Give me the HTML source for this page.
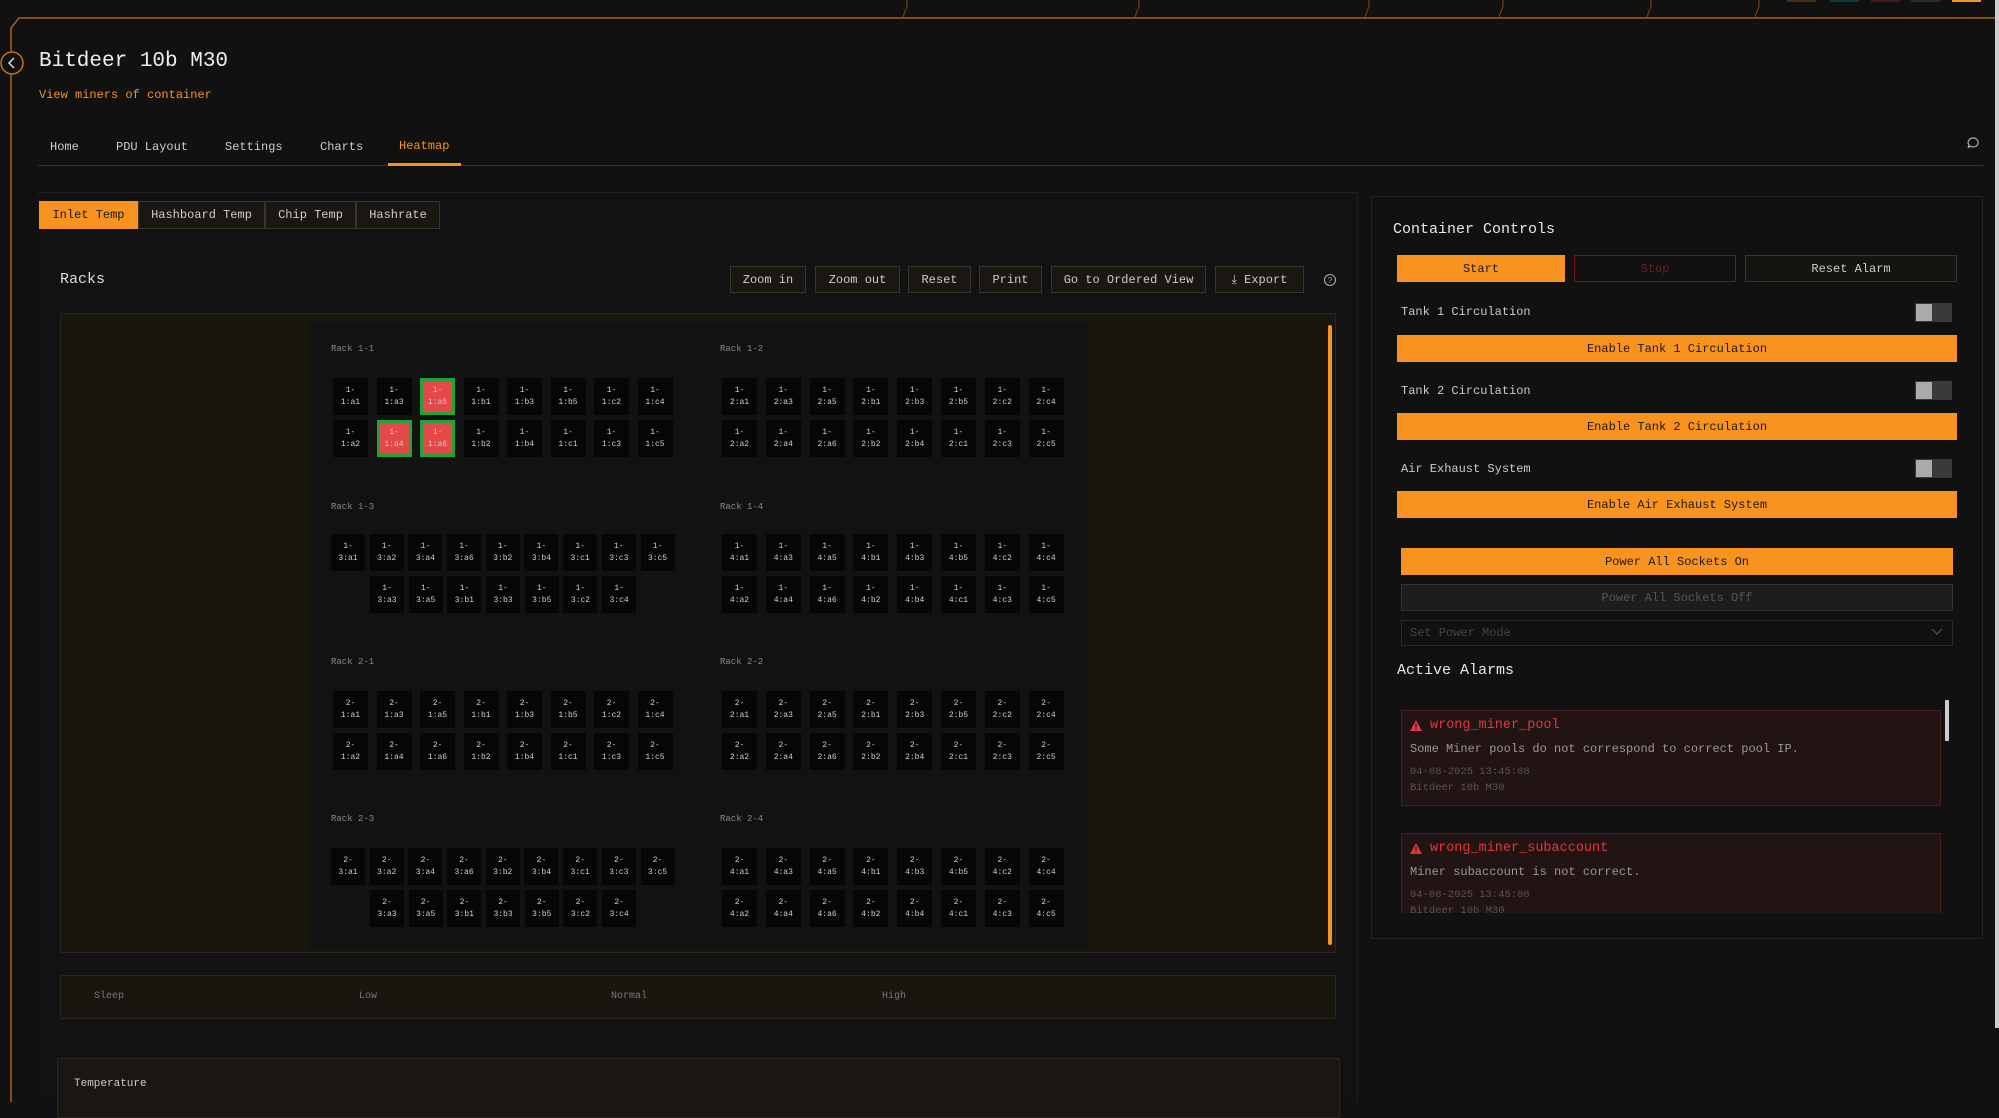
<!DOCTYPE html>
<html><head><meta charset="utf-8">
<style>
*{margin:0;padding:0;box-sizing:border-box}
body{width:1999px;height:1102px;background:#111111;font-family:"Liberation Mono",monospace;color:#ddd;position:relative;overflow:hidden}
.a{position:absolute}
.t{position:absolute;white-space:nowrap;line-height:1}
.btn{position:absolute;display:flex;align-items:center;justify-content:center;font-size:12px;white-space:nowrap}
.tb{background:#1a1712;border:1px solid #3a352c;color:#ccc}
.or{background:#f7931e;color:#1a1a1a}
.row{position:absolute;display:flex}
.c{width:35px;height:37px;background:#060606;color:#cfcfcf;font-size:8px;line-height:12px;text-align:center;padding-top:7px;flex:none}
.n{width:34px}
.r{background:#e54848;border:3px solid #1fa33a;padding-top:4px}
.lbl{position:absolute;font-size:9px;color:#888}
</style></head><body>
<!-- top decorations -->
<div class="a" style="left:1787px;top:0;width:29px;height:2px;background:#4a3010"></div>
<div class="a" style="left:1830px;top:0;width:29px;height:2px;background:#0d3a3a"></div>
<div class="a" style="left:1871px;top:0;width:29px;height:2px;background:#4a1818"></div>
<div class="a" style="left:1911px;top:0;width:29px;height:2px;background:#2a2a30"></div>
<div class="a" style="left:1952px;top:0;width:29px;height:2px;background:#f7931e"></div>
<svg class="a" style="left:0;top:0" width="1999" height="1102">
<path d="M11 1102 V28 L19 18 H1995" fill="none" stroke="#a8630f" stroke-width="1.5"/>
<path d="M903 17 L907 6 V0 M1135 17 L1139 6 V0 M1365 17 L1369 6 V0 M1499 17 L1503 6 V0 M1647 17 L1651 6 V0 M1755 17 L1759 6 V0" stroke="#7a4a12" stroke-width="1" fill="none"/>
<circle cx="12" cy="63" r="11" fill="#111" stroke="#c07316" stroke-width="1.5"/>
<path d="M14 58 L9 63 L14 68" fill="none" stroke="#ddd" stroke-width="1.5"/>
</svg>
<div class="a" style="left:1995px;top:0;width:4px;height:1028px;background:#cfcfcf"></div>

<div class="t" style="left:39px;top:51px;font-size:21px;color:#eee">Bitdeer 10b M30</div>
<div class="t" style="left:39px;top:89px;font-size:12px;color:#f7931e">View miners of container</div>

<div class="t" style="left:50px;top:141px;font-size:12px;color:#ccc">Home</div>
<div class="t" style="left:116px;top:141px;font-size:12px;color:#ccc">PDU Layout</div>
<div class="t" style="left:225px;top:141px;font-size:12px;color:#ccc">Settings</div>
<div class="t" style="left:320px;top:141px;font-size:12px;color:#ccc">Charts</div>
<div class="t" style="left:399px;top:140px;font-size:12px;color:#f7931e">Heatmap</div>
<div class="a" style="left:38px;top:165px;width:1945px;height:1px;background:#333"></div>
<div class="a" style="left:388px;top:163px;width:73px;height:3px;background:#f7931e"></div>
<svg class="a" style="left:1966px;top:136px" width="14" height="14"><path d="M7 2 A5 4.5 0 1 1 4 10 L2 12 L3 9 A5 4.5 0 0 1 7 2Z" fill="none" stroke="#aaa" stroke-width="1.2"/></svg>

<!-- left panel -->
<div class="a" style="left:38px;top:192px;width:1320px;height:910px;background:#121212;border-top:1px solid #222;border-right:1px solid #1e1e1e"></div>
<div class="btn or" style="left:39px;top:201px;width:99px;height:28px">Inlet Temp</div>
<div class="btn tb" style="left:138px;top:201px;width:127px;height:28px">Hashboard Temp</div>
<div class="btn tb" style="left:265px;top:201px;width:91px;height:28px">Chip Temp</div>
<div class="btn tb" style="left:356px;top:201px;width:84px;height:28px">Hashrate</div>

<div class="t" style="left:60px;top:272px;font-size:15px;color:#ddd">Racks</div>
<div class="btn tb" style="left:730px;top:266px;width:76px;height:27px">Zoom in</div>
<div class="btn tb" style="left:815px;top:266px;width:85px;height:27px">Zoom out</div>
<div class="btn tb" style="left:908px;top:266px;width:63px;height:27px">Reset</div>
<div class="btn tb" style="left:979px;top:266px;width:63px;height:27px">Print</div>
<div class="btn tb" style="left:1051px;top:266px;width:155px;height:27px">Go to Ordered View</div>
<div class="btn tb" style="left:1215px;top:266px;width:89px;height:27px">⤓ Export</div>
<svg class="a" style="left:1323px;top:273px" width="14" height="14"><circle cx="7" cy="7" r="5.5" fill="none" stroke="#aaa" stroke-width="1.1"/><text x="7" y="10" font-size="8" fill="#aaa" text-anchor="middle" font-family="Liberation Sans">?</text></svg>

<div class="a" style="left:60px;top:313px;width:1276px;height:640px;background:#19160f;border:1px solid #2a261e"></div>
<div class="a" style="left:309px;top:322px;width:779px;height:626px;background:#121212"></div>
<div class="a" style="left:1328px;top:325px;width:4px;height:620px;background:#f7931e;border-radius:2px"></div>

<div class="lbl" style="left:331px;top:344px">Rack 1-1</div>
<div class="lbl" style="left:720px;top:344px">Rack 1-2</div>
<div class="lbl" style="left:331px;top:502px">Rack 1-3</div>
<div class="lbl" style="left:720px;top:502px">Rack 1-4</div>
<div class="lbl" style="left:331px;top:657px">Rack 2-1</div>
<div class="lbl" style="left:720px;top:657px">Rack 2-2</div>
<div class="lbl" style="left:331px;top:814px">Rack 2-3</div>
<div class="lbl" style="left:720px;top:814px">Rack 2-4</div>

<!-- Rack 1-1 -->
<div class="row" style="left:333px;top:378px;gap:8.5px"><div class="c">1-<br>1:a1</div><div class="c">1-<br>1:a3</div><div class="c r">1-<br>1:a5</div><div class="c">1-<br>1:b1</div><div class="c">1-<br>1:b3</div><div class="c">1-<br>1:b5</div><div class="c">1-<br>1:c2</div><div class="c">1-<br>1:c4</div></div>
<div class="row" style="left:333px;top:420px;gap:8.5px"><div class="c">1-<br>1:a2</div><div class="c r">1-<br>1:a4</div><div class="c r">1-<br>1:a6</div><div class="c">1-<br>1:b2</div><div class="c">1-<br>1:b4</div><div class="c">1-<br>1:c1</div><div class="c">1-<br>1:c3</div><div class="c">1-<br>1:c5</div></div>
<!-- Rack 1-2 -->
<div class="row" style="left:722px;top:378px;gap:8.8px"><div class="c">1-<br>2:a1</div><div class="c">1-<br>2:a3</div><div class="c">1-<br>2:a5</div><div class="c">1-<br>2:b1</div><div class="c">1-<br>2:b3</div><div class="c">1-<br>2:b5</div><div class="c">1-<br>2:c2</div><div class="c">1-<br>2:c4</div></div>
<div class="row" style="left:722px;top:420px;gap:8.8px"><div class="c">1-<br>2:a2</div><div class="c">1-<br>2:a4</div><div class="c">1-<br>2:a6</div><div class="c">1-<br>2:b2</div><div class="c">1-<br>2:b4</div><div class="c">1-<br>2:c1</div><div class="c">1-<br>2:c3</div><div class="c">1-<br>2:c5</div></div>
<!-- Rack 1-3 -->
<div class="row" style="left:331px;top:534px;gap:4.7px"><div class="c n">1-<br>3:a1</div><div class="c n">1-<br>3:a2</div><div class="c n">1-<br>3:a4</div><div class="c n">1-<br>3:a6</div><div class="c n">1-<br>3:b2</div><div class="c n">1-<br>3:b4</div><div class="c n">1-<br>3:c1</div><div class="c n">1-<br>3:c3</div><div class="c n">1-<br>3:c5</div></div>
<div class="row" style="left:370px;top:576px;gap:4.7px"><div class="c n">1-<br>3:a3</div><div class="c n">1-<br>3:a5</div><div class="c n">1-<br>3:b1</div><div class="c n">1-<br>3:b3</div><div class="c n">1-<br>3:b5</div><div class="c n">1-<br>3:c2</div><div class="c n">1-<br>3:c4</div></div>
<!-- Rack 1-4 -->
<div class="row" style="left:722px;top:534px;gap:8.8px"><div class="c">1-<br>4:a1</div><div class="c">1-<br>4:a3</div><div class="c">1-<br>4:a5</div><div class="c">1-<br>4:b1</div><div class="c">1-<br>4:b3</div><div class="c">1-<br>4:b5</div><div class="c">1-<br>4:c2</div><div class="c">1-<br>4:c4</div></div>
<div class="row" style="left:722px;top:576px;gap:8.8px"><div class="c">1-<br>4:a2</div><div class="c">1-<br>4:a4</div><div class="c">1-<br>4:a6</div><div class="c">1-<br>4:b2</div><div class="c">1-<br>4:b4</div><div class="c">1-<br>4:c1</div><div class="c">1-<br>4:c3</div><div class="c">1-<br>4:c5</div></div>
<!-- Rack 2-1 -->
<div class="row" style="left:333px;top:691px;gap:8.5px"><div class="c">2-<br>1:a1</div><div class="c">2-<br>1:a3</div><div class="c">2-<br>1:a5</div><div class="c">2-<br>1:b1</div><div class="c">2-<br>1:b3</div><div class="c">2-<br>1:b5</div><div class="c">2-<br>1:c2</div><div class="c">2-<br>1:c4</div></div>
<div class="row" style="left:333px;top:733px;gap:8.5px"><div class="c">2-<br>1:a2</div><div class="c">2-<br>1:a4</div><div class="c">2-<br>1:a6</div><div class="c">2-<br>1:b2</div><div class="c">2-<br>1:b4</div><div class="c">2-<br>1:c1</div><div class="c">2-<br>1:c3</div><div class="c">2-<br>1:c5</div></div>
<!-- Rack 2-2 -->
<div class="row" style="left:722px;top:691px;gap:8.8px"><div class="c">2-<br>2:a1</div><div class="c">2-<br>2:a3</div><div class="c">2-<br>2:a5</div><div class="c">2-<br>2:b1</div><div class="c">2-<br>2:b3</div><div class="c">2-<br>2:b5</div><div class="c">2-<br>2:c2</div><div class="c">2-<br>2:c4</div></div>
<div class="row" style="left:722px;top:733px;gap:8.8px"><div class="c">2-<br>2:a2</div><div class="c">2-<br>2:a4</div><div class="c">2-<br>2:a6</div><div class="c">2-<br>2:b2</div><div class="c">2-<br>2:b4</div><div class="c">2-<br>2:c1</div><div class="c">2-<br>2:c3</div><div class="c">2-<br>2:c5</div></div>
<!-- Rack 2-3 -->
<div class="row" style="left:331px;top:848px;gap:4.7px"><div class="c n">2-<br>3:a1</div><div class="c n">2-<br>3:a2</div><div class="c n">2-<br>3:a4</div><div class="c n">2-<br>3:a6</div><div class="c n">2-<br>3:b2</div><div class="c n">2-<br>3:b4</div><div class="c n">2-<br>3:c1</div><div class="c n">2-<br>3:c3</div><div class="c n">2-<br>3:c5</div></div>
<div class="row" style="left:370px;top:890px;gap:4.7px"><div class="c n">2-<br>3:a3</div><div class="c n">2-<br>3:a5</div><div class="c n">2-<br>3:b1</div><div class="c n">2-<br>3:b3</div><div class="c n">2-<br>3:b5</div><div class="c n">2-<br>3:c2</div><div class="c n">2-<br>3:c4</div></div>
<!-- Rack 2-4 -->
<div class="row" style="left:722px;top:848px;gap:8.8px"><div class="c">2-<br>4:a1</div><div class="c">2-<br>4:a3</div><div class="c">2-<br>4:a5</div><div class="c">2-<br>4:b1</div><div class="c">2-<br>4:b3</div><div class="c">2-<br>4:b5</div><div class="c">2-<br>4:c2</div><div class="c">2-<br>4:c4</div></div>
<div class="row" style="left:722px;top:890px;gap:8.8px"><div class="c">2-<br>4:a2</div><div class="c">2-<br>4:a4</div><div class="c">2-<br>4:a6</div><div class="c">2-<br>4:b2</div><div class="c">2-<br>4:b4</div><div class="c">2-<br>4:c1</div><div class="c">2-<br>4:c3</div><div class="c">2-<br>4:c5</div></div>

<!-- legend -->
<div class="a" style="left:60px;top:975px;width:1276px;height:44px;background:#19160f;border:1px solid #2a261e"></div>
<div class="t" style="left:94px;top:992px;font-size:10px;color:#777">Sleep</div>
<div class="t" style="left:359px;top:992px;font-size:10px;color:#777">Low</div>
<div class="t" style="left:611px;top:992px;font-size:10px;color:#777">Normal</div>
<div class="t" style="left:882px;top:992px;font-size:10px;color:#777">High</div>
<div class="a" style="left:57px;top:1058px;width:1283px;height:60px;background:#1a1712;border:1px solid #2a261e"></div>
<div class="t" style="left:74px;top:1079px;font-size:11px;color:#ccc">Temperature</div>

<!-- right panel -->
<div class="a" style="left:1371px;top:196px;width:612px;height:743px;background:#111;border:1px solid #232323"></div>
<div class="t" style="left:1393px;top:222px;font-size:15px;color:#e8e8e8">Container Controls</div>
<div class="btn or" style="left:1397px;top:255px;width:168px;height:27px">Start</div>
<div class="btn" style="left:1574px;top:255px;width:162px;height:27px;border:1.5px solid #7a1414;color:#6e1d1d">Stop</div>
<div class="btn tb" style="left:1745px;top:255px;width:212px;height:27px;background:#161411">Reset Alarm</div>

<div class="t" style="left:1401px;top:306px;font-size:12px;color:#ccc">Tank 1 Circulation</div>
<div class="a" style="left:1915px;top:303px;width:37px;height:19px;background:#3a3a3a"></div><div class="a" style="left:1916px;top:304px;width:16px;height:17px;background:#aaa"></div>
<div class="btn or" style="left:1397px;top:335px;width:560px;height:27px">Enable Tank 1 Circulation</div>
<div class="t" style="left:1401px;top:385px;font-size:12px;color:#ccc">Tank 2 Circulation</div>
<div class="a" style="left:1915px;top:381px;width:37px;height:19px;background:#3a3a3a"></div><div class="a" style="left:1916px;top:382px;width:16px;height:17px;background:#aaa"></div>
<div class="btn or" style="left:1397px;top:413px;width:560px;height:27px">Enable Tank 2 Circulation</div>
<div class="t" style="left:1401px;top:463px;font-size:12px;color:#ccc">Air Exhaust System</div>
<div class="a" style="left:1915px;top:459px;width:37px;height:19px;background:#3a3a3a"></div><div class="a" style="left:1916px;top:460px;width:16px;height:17px;background:#aaa"></div>
<div class="btn or" style="left:1397px;top:491px;width:560px;height:27px">Enable Air Exhaust System</div>

<div class="btn or" style="left:1401px;top:548px;width:552px;height:27px">Power All Sockets On</div>
<div class="btn" style="left:1401px;top:584px;width:552px;height:27px;background:#1d1d1d;border:1px solid #333;color:#555">Power All Sockets Off</div>
<div class="a" style="left:1401px;top:620px;width:552px;height:26px;border:1px solid #2a2a2a"></div>
<div class="t" style="left:1410px;top:627px;font-size:12px;color:#444">Set Power Mode</div>
<svg class="a" style="left:1931px;top:627px" width="12" height="10"><path d="M1 2 L6 7 L11 2" fill="none" stroke="#555" stroke-width="1.2"/></svg>

<div class="t" style="left:1397px;top:663px;font-size:15px;color:#e8e8e8">Active Alarms</div>
<div class="a" style="left:1945px;top:700px;width:4px;height:41px;background:#ccc;border-radius:1px"></div>
<div class="a" style="left:1401px;top:700px;width:540px;height:213px;overflow:hidden">
 <div class="a" style="left:0;top:10px;width:540px;height:96px;background:#221414;border:1px solid #4a1c1c">
  <svg class="a" style="left:8px;top:9px" width="12" height="11"><path d="M6 0 L12 11 H0Z" fill="#e0393c"/><rect x="5.4" y="3.5" width="1.2" height="4" fill="#221414"/><rect x="5.4" y="8.5" width="1.2" height="1.2" fill="#221414"/></svg>
  <div class="t" style="left:28px;top:8px;font-size:13.5px;color:#e0393c">wrong_miner_pool</div>
  <div class="t" style="left:8px;top:32px;font-size:12px;color:#999">Some Miner pools do not correspond to correct pool IP.</div>
  <div class="t" style="left:8px;top:56px;font-size:10.5px;color:#555">04-08-2025 13:45:08</div>
  <div class="t" style="left:8px;top:72px;font-size:10.5px;color:#555">Bitdeer 10b M30</div>
 </div>
 <div class="a" style="left:0;top:133px;width:540px;height:96px;background:#221414;border:1px solid #4a1c1c">
  <svg class="a" style="left:8px;top:9px" width="12" height="11"><path d="M6 0 L12 11 H0Z" fill="#e0393c"/><rect x="5.4" y="3.5" width="1.2" height="4" fill="#221414"/><rect x="5.4" y="8.5" width="1.2" height="1.2" fill="#221414"/></svg>
  <div class="t" style="left:28px;top:8px;font-size:13.5px;color:#e0393c">wrong_miner_subaccount</div>
  <div class="t" style="left:8px;top:32px;font-size:12px;color:#999">Miner subaccount is not correct.</div>
  <div class="t" style="left:8px;top:56px;font-size:10.5px;color:#555">04-08-2025 13:45:08</div>
  <div class="t" style="left:8px;top:72px;font-size:10.5px;color:#555">Bitdeer 10b M30</div>
 </div>
</div>
</body></html>
